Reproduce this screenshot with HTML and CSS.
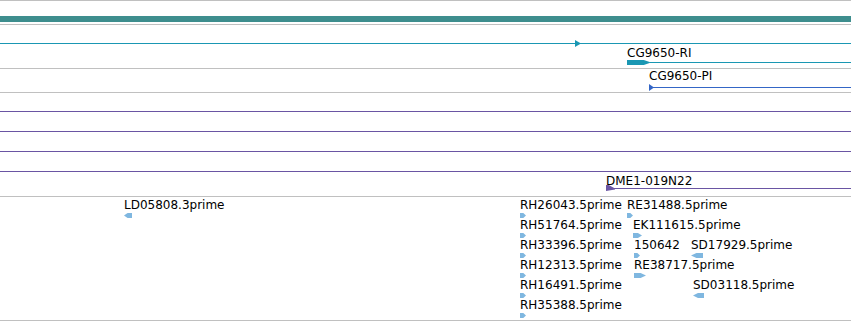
FILE: index.html
```html
<!DOCTYPE html>
<html lang="en">
<head>
  <meta charset="UTF-8">
  <meta name="viewport" content="width=device-width, initial-scale=1.0">
  <title>Tracks</title>
  <link rel="stylesheet" href="styles.css">
</head>
<body>
  <div class="view">
    <div class="track track-ref">
      <div class="ref-bar"></div>
    </div>
    <div class="track track-gene">
      <div class="line teal" style="top: 18px; left: 0;"></div>
      <div class="head right teal" style="left: 575px; top: 15px; width: 6px; height: 7px;"></div>
      <div class="label" style="left: 627px; top: 21px;">CG9650-RI</div>
      <div class="exon teal" style="left: 627px; top: 35px; width: 24px;"></div>
      <div class="line teal" style="top: 37px; left: 650px;"></div>
    </div>
    <div class="track track-gene2">
      <div class="label" style="left: 649px; top: 0;">CG9650-PI</div>
      <div class="line blue" style="top: 18px; left: 649px;"></div>
      <div class="head right blue" style="left: 649px; top: 15px; width: 5px; height: 7px;"></div>
    </div>
    <div class="track track-clone">
      <div class="line purple" style="top: 18px; left: 0;"></div>
      <div class="line purple" style="top: 38px; left: 0;"></div>
      <div class="line purple" style="top: 58px; left: 0;"></div>
      <div class="line purple" style="top: 78px; left: 0;"></div>
      <div class="label" style="left: 606px; top: 81px;">DME1-019N22</div>
      <div class="line purple" style="top: 95px; left: 606px;"></div>
      <div class="head flag purple" style="left: 606px; top: 92px; width: 9px; height: 6px;"></div>
    </div>
    <div class="track track-est" id="estTrack">
      <!-- EST features are added by the script -->
    </div>
  </div>

  <script>
    // row, x, label, arrow width, strand
    const ests = [
      { row: 0, x: 124, name: 'LD05808.3prime', w: 8, dir: 'left' },
      { row: 0, x: 520, name: 'RH26043.5prime', w: 6, dir: 'right' },
      { row: 0, x: 627, name: 'RE31488.5prime', w: 6, dir: 'right' },
      { row: 1, x: 520, name: 'RH51764.5prime', w: 6, dir: 'right' },
      { row: 1, x: 633, name: 'EK111615.5prime', w: 9, dir: 'right' },
      { row: 2, x: 520, name: 'RH33396.5prime', w: 6, dir: 'right' },
      { row: 2, x: 634, name: '150642', w: 6, dir: 'right' },
      { row: 2, x: 691, name: 'SD17929.5prime', w: 12, dir: 'left' },
      { row: 3, x: 520, name: 'RH12313.5prime', w: 6, dir: 'right' },
      { row: 3, x: 634, name: 'RE38717.5prime', w: 12, dir: 'right' },
      { row: 4, x: 520, name: 'RH16491.5prime', w: 6, dir: 'right' },
      { row: 4, x: 693, name: 'SD03118.5prime', w: 11, dir: 'left' },
      { row: 5, x: 520, name: 'RH35388.5prime', w: 6, dir: 'right' }
    ];

    const estTrack = document.getElementById('estTrack');

    ests.forEach(est => {
      const top = 1 + est.row * 20;

      const label = document.createElement('div');
      label.className = 'label';
      label.textContent = est.name;
      label.style.left = est.x + 'px';
      label.style.top = top + 'px';
      estTrack.appendChild(label);

      const arrow = document.createElement('div');
      arrow.className = 'est ' + est.dir;
      arrow.style.left = est.x + 'px';
      arrow.style.top = (top + 15) + 'px';
      arrow.style.width = est.w + 'px';
      estTrack.appendChild(arrow);
    });
  </script>
</body>
</html>
```

FILE: styles.css
```css
/* Track view */
body {
  margin: 0;
  padding: 0;
  background-color: #fff;
  font-family: "DejaVu Sans", Verdana, sans-serif;
  font-size: 12px;
  color: #000;
  overflow: hidden;
}

.view {
  width: 851px;
  border-top: 1px solid #c0c0c0;
}

.track {
  position: relative;
  border-bottom: 1px solid #c0c0c0;
  overflow: hidden;
}

.track-ref {
  height: 23px;
}

.track-gene {
  height: 43px;
}

.track-gene2 {
  height: 23px;
}

.track-clone {
  height: 103px;
}

.track-est {
  height: 123px;
}

.ref-bar {
  position: absolute;
  left: 0;
  right: 0;
  top: 15px;
  height: 6px;
  background-color: #3e8e8e;
}

.label {
  position: absolute;
  line-height: 14px;
  white-space: nowrap;
}

.line {
  position: absolute;
  right: 0;
  height: 1px;
}

.exon {
  position: absolute;
  height: 5px;
  clip-path: polygon(0 0, 70% 0, 100% 50%, 70% 100%, 0 100%);
}

.head {
  position: absolute;
}

.head.right {
  clip-path: polygon(0 0, 100% 50%, 0 100%);
}

.head.flag {
  clip-path: polygon(0 0, 30% 0, 100% 60%, 100% 75%, 0 100%);
}

.teal {
  background-color: #1a97b3;
}

.blue {
  background-color: #3466c6;
}

.purple {
  background-color: #6a55a3;
}

.est {
  position: absolute;
  height: 5px;
  background-color: #7fb7e0;
}

.est.right {
  clip-path: polygon(0 0, 55% 0, 100% 50%, 55% 100%, 0 100%);
}

.est.left {
  clip-path: polygon(0 50%, 45% 0, 100% 0, 100% 100%, 45% 100%);
}
```
